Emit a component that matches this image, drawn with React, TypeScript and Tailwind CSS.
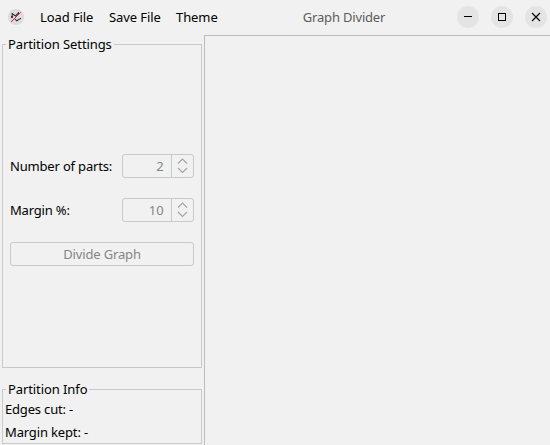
import React from 'react';

function AppIcon() {
  return (
    <svg width="16" height="16" viewBox="0 0 16 16" className="block" fill="none">
      <circle cx="8" cy="8" r="8" fill="#dcdcdc" />
      <path d="M4.2 9V4.8L7.6 7L10.4 4M7 10L8.6 11.8L12.2 9.6" stroke="#2e3440" strokeWidth="1.1" />
      <g fill="#2e3440">
        <rect x="4" y="4" width="1" height="2" />
        <rect x="3" y="7" width="2" height="2" />
        <rect x="10" y="3" width="1" height="2" />
        <rect x="12" y="9" width="1" height="1" />
        <rect x="8" y="11" width="2" height="1" />
      </g>
      <path d="M3 13L12.8 3.2" stroke="#ee1c25" strokeWidth="1" />
    </svg>
  );
}

function Spin({ value }: { value: number }) {
  return (
    <div className="flex h-6 w-[72px] rounded-[3px] border border-[#c9c9c9] tracking-[-0.1px] text-[#858585]">
      <div className="flex flex-1 items-center justify-end pr-[7.5px]">{value}</div>
      <div className="flex w-[22px] items-center justify-center border-l border-[#c9c9c9]">
        <svg width="11" height="16" viewBox="0 0 11 16" fill="none" stroke="#a3a3a3" strokeWidth="1.1">
          <path d="M1 5.5L5.5 1L10 5.5M1 10L5.5 14.5L10 10" />
        </svg>
      </div>
    </div>
  );
}

function WindowButton({ children }: { children: React.ReactNode }) {
  return (
    <div className="size-[22px] rounded-full bg-[#e4e4e4]">
      <svg width="22" height="22" viewBox="0 0 22 22" fill="none" stroke="#000" className="block">
        {children}
      </svg>
    </div>
  );
}

export default function App() {
  return (
    <div className="flex h-[445px] w-[550px] flex-col overflow-hidden bg-[#f1f1f1] font-['Noto_Sans',sans-serif] text-[13px] leading-[18px] tracking-[-0.09px] whitespace-nowrap text-black">
      <header className="mb-px flex h-[34px] shrink-0 items-center pl-2">
        <AppIcon />
        <div className="ml-4 w-[69px]">Load File</div>
        <div className="w-[67px]">Save File</div>
        <div className="w-[42px]">Theme</div>
        <div className="flex-1 pl-[13px] text-center tracking-[-0.18px] text-[#5c5c5c]">Graph Divider</div>
        <div className="flex gap-3 pr-[3px]">
          <WindowButton><path d="M7 10.5H15" /></WindowButton>
          <WindowButton><rect x="7.5" y="7.5" width="7" height="7" /></WindowButton>
          <WindowButton><path d="M7 7L15 15M15 7L7 15" strokeWidth="1.2" /></WindowButton>
        </div>
      </header>
      <div className="flex min-h-0 flex-1">
        <aside className="w-[204px] shrink-0 pl-0.5">
          <fieldset className="h-[333px] w-[200px] border border-[#c9c9c9] px-[7px]">
            <legend className="-ml-1 h-[19px] px-0.5 leading-[19px]">Partition Settings</legend>
            <div className="mt-[100px] flex h-6 items-center justify-between">
              <span className="tracking-[-0.18px]">Number of parts:</span>
              <Spin value={2} />
            </div>
            <div className="mt-5 flex h-6 items-center justify-between">
              <span className="tracking-[-0.18px]">Margin %:</span>
              <Spin value={10} />
            </div>
            <button disabled className="mt-5 flex h-6 w-full items-center justify-center rounded-[3px] border border-[#c9c9c9] tracking-[-0.15px] text-[#858585]">
              Divide Graph
            </button>
          </fieldset>
          <fieldset className="mt-3 h-[64px] w-[200px] border border-[#c9c9c9] px-0.5">
            <legend className="ml-px h-[19px] px-0.5 leading-[19px]">Partition Info</legend>
            <div className="mt-px tracking-[-0.18px]">Edges cut: -</div>
            <div className="mt-[5px] tracking-[-0.15px]">Margin kept: -</div>
          </fieldset>
        </aside>
        <main className="flex-1 border-t border-l border-[#bcbcbc]" />
      </div>
    </div>
  );
}
